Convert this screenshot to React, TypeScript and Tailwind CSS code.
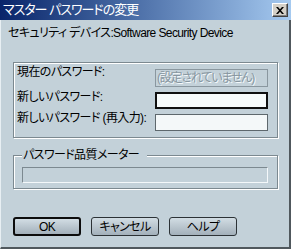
import React from 'react';

const font = "font-['Liberation_Sans','Noto_Sans_CJK_JP',sans-serif] [font-feature-settings:'palt']";

function CloseButton() {
  return (
    <div className="mr-[3px] flex h-[14px] w-[16px] items-center justify-center border border-t-white border-l-white border-r-[#404040] border-b-[#404040] bg-[#d4d0c8] shadow-[inset_-1px_-1px_0_#808080]">
      <svg width="8" height="7" viewBox="0 0 8 7">
        <path d="M0 0h2l2 2.3L6 0h2L5 3.5 8 7H6L4 4.7 2 7H0l3-3.5z" fill="#000" />
      </svg>
    </div>
  );
}

function Button({ label, primary }: { label: string; primary?: boolean }) {
  return (
    <button
      className={`h-[19px] w-[68px] rounded-[3px] bg-gradient-to-b from-[#d2dde4] to-[#a3b0ba] text-[12px] leading-none tracking-[-0.6px] text-black ${
        primary ? 'border-2 border-[#0c0c0c]' : 'border border-[#2c3236]'
      }`}
    >
      {label}
    </button>
  );
}

export default function App() {
  return (
    <div className={`flex h-[249px] w-[291px] flex-col bg-[#c3d1d9] ${font}`}>
      {/* title bar */}
      <div className="flex h-[20px] shrink-0 items-center justify-between bg-gradient-to-r from-[#0a246a] to-[#a6caf0]">
        <span className="pl-[3px] text-[13px] leading-[20px] tracking-[-1px] text-white">マスター パスワードの変更</span>
        <CloseButton />
      </div>

      <div className="flex flex-1 flex-col border-b-2 border-l border-r-2 border-l-[#e8eff3] border-r-[#50585d] border-b-[#50585d]">
        <div className="whitespace-nowrap pl-[7px] pt-[6px] text-[12px] leading-[14px] tracking-[-0.6px] text-black">
          セキュリティ デバイス:Software Security Device
        </div>

        {/* password fields */}
        <div className="ml-[12px] mt-[22px] w-[265px] border border-[#7c8990] pb-[6px] pl-[3px] pr-[9px] pt-[6px] shadow-[1px_1px_0_#fff,inset_1px_1px_0_#fff]">
          <div className="flex flex-col gap-[5px] whitespace-nowrap text-[12px] leading-[14px] tracking-[-0.6px] text-black">
            <div className="flex items-start justify-between">
              <span className="-mt-[4px]">現在のパスワード:</span>
              <div className="h-[18px] w-[113px] overflow-hidden border border-[#8a979f] pl-[1px] text-[12px] leading-[16px] tracking-[-1.2px] text-[#8796a0] [text-shadow:1px_1px_0_#f4f8fa]">
                (設定されていません)
              </div>
            </div>
            <div className="flex items-start justify-between">
              <span className="-mt-[2px]">新しいパスワード:</span>
              <div className="h-[17px] w-[113px] border-2 border-[#101010] bg-[#f7fbfb]" />
            </div>
            <div className="flex items-start justify-between">
              <span className="-mt-[3px]">新しいパスワード (再入力):</span>
              <div className="h-[17px] w-[113px] border border-[#5e686d] bg-[#f4f8f9]" />
            </div>
          </div>
        </div>

        {/* quality meter */}
        <fieldset className="ml-[12px] mt-[10px] w-[265px] border border-[#7c8990] pb-[5px] pl-[8px] pr-[8px] shadow-[1px_1px_0_#fff,inset_1px_1px_0_#fff]">
          <legend className="bg-[#c3d1d9] pl-[1px] pr-[8px] text-[12px] leading-[14px] tracking-[-0.6px] text-black">パスワード品質メーター</legend>
          <div className="mt-[5px] h-[16px] w-[246px] border border-t-[#7c8990] border-l-[#7c8990] border-r-[#f4f8fa] border-b-[#f4f8fa]" />
        </fieldset>

        {/* buttons */}
        <div className="ml-[12px] mt-[28px] flex gap-[10px]">
          <Button label="OK" primary />
          <Button label="キャンセル" />
          <Button label="ヘルプ" />
        </div>
      </div>
    </div>
  );
}
